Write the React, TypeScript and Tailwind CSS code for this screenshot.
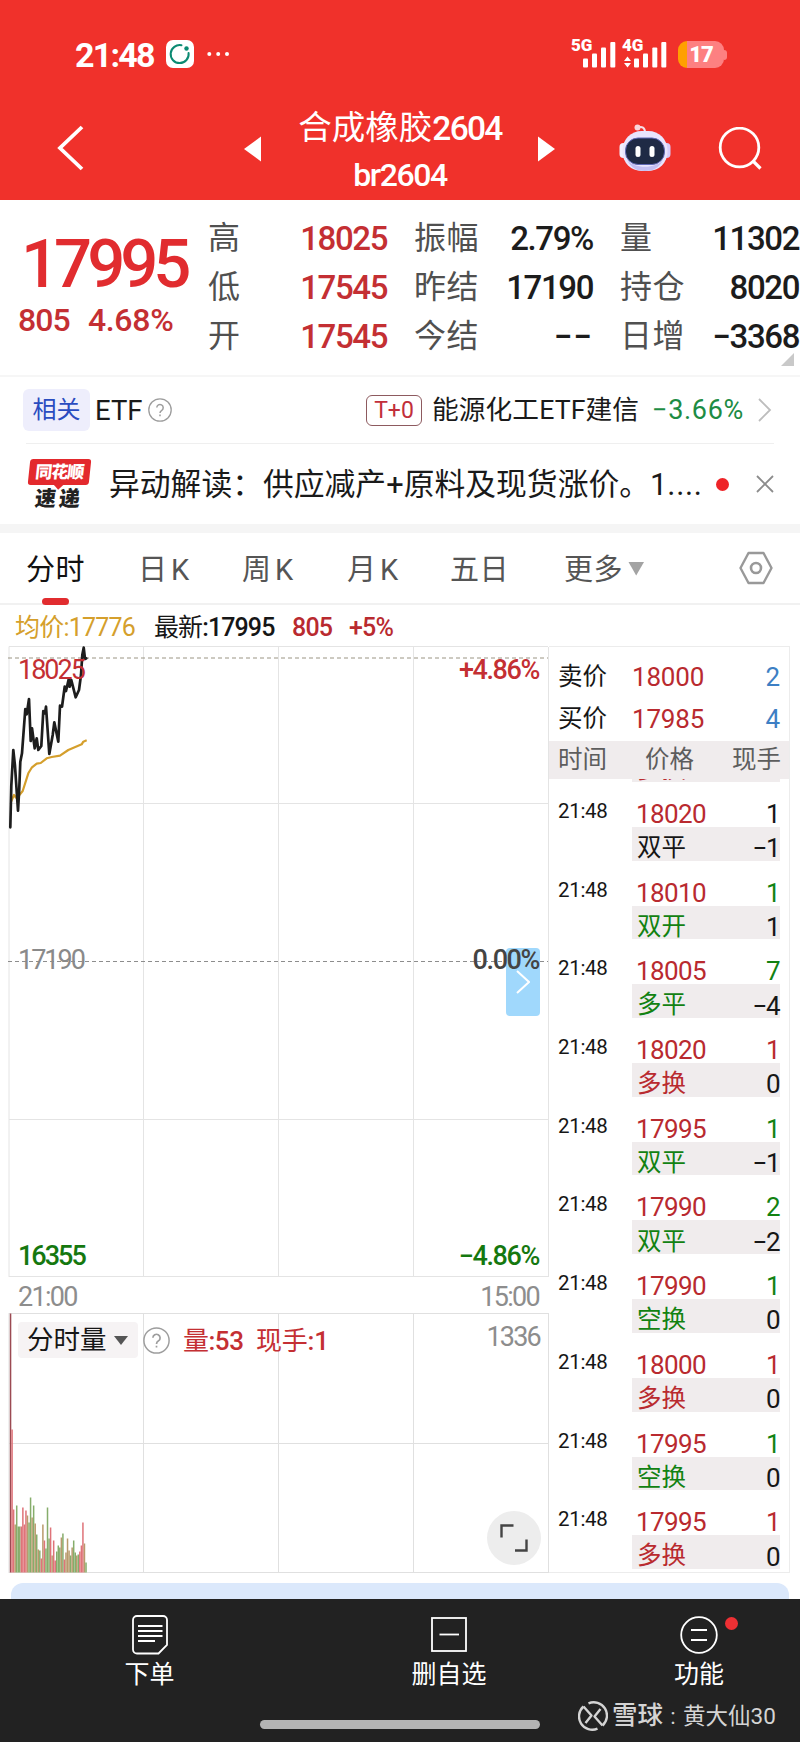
import { clsx } from "clsx";

type Tone = "red" | "green" | "black";

const toneClass: Record<Tone, string> = {
  red: "text-[#b92a2f]",
  green: "text-[#128212]",
  black: "text-[#161616]",
};

const stats = [
  [
    { label: "高", value: "18025", red: true },
    { label: "低", value: "17545", red: true },
    { label: "开", value: "17545", red: true },
  ],
  [
    { label: "振幅", value: "2.79%", red: false },
    { label: "昨结", value: "17190", red: false },
    { label: "今结", value: "−−", red: false },
  ],
  [
    { label: "量", value: "11302", red: false },
    { label: "持仓", value: "8020", red: false },
    { label: "日增", value: "−3368", red: false },
  ],
];

const trades: { price: string; vol: string; volTone: Tone; kind: string; kindTone: Tone; delta: string }[] = [
  { price: "18020", vol: "1", volTone: "black", kind: "双平", kindTone: "black", delta: "−1" },
  { price: "18010", vol: "1", volTone: "green", kind: "双开", kindTone: "green", delta: "1" },
  { price: "18005", vol: "7", volTone: "green", kind: "多平", kindTone: "green", delta: "−4" },
  { price: "18020", vol: "1", volTone: "red", kind: "多换", kindTone: "red", delta: "0" },
  { price: "17995", vol: "1", volTone: "green", kind: "双平", kindTone: "green", delta: "−1" },
  { price: "17990", vol: "2", volTone: "green", kind: "双平", kindTone: "green", delta: "−2" },
  { price: "17990", vol: "1", volTone: "green", kind: "空换", kindTone: "green", delta: "0" },
  { price: "18000", vol: "1", volTone: "red", kind: "多换", kindTone: "red", delta: "0" },
  { price: "17995", vol: "1", volTone: "green", kind: "空换", kindTone: "green", delta: "0" },
  { price: "17995", vol: "1", volTone: "red", kind: "多换", kindTone: "red", delta: "0" },
];

const priceLine =
  "2.3,181.3 3.3,140 5.3,104 7,120 10,164.7 11.3,142 12.3,115.7 14,107.3 17.3,63 18.7,68.3 21,53 22.7,95 24,82.3 26.7,102.3 28.7,92.3 30.3,104 33.3,100 35.3,65 37,67.3 38,60.7 41.3,108 44.7,89 46.3,76.3 50.3,95.7 52,59.7 54,60.7 56.7,40.7 58,45 60.7,33.3 61.7,40.7 63.3,34 67.7,51.3 71,44 73,29 74.3,9 75.7,1.7 77,13 78.3,12.3";

const avgLine =
  "3,155.7 6,149 8.7,152.3 14.7,145 20.3,127.3 23.7,121.7 28.7,117.7 32.7,117 38.7,112.3 43.7,111 52,109.7 60.3,104 73.7,98.3 75.3,95.7 78.7,94.3";

// [height, colour key] per minute bar
const volumes: [number, string][] = [
  [259, "d"], [143, "r"], [63, "r"], [48, "t"], [67, "g"], [46, "g"], [46, "g"], [46, "r"], [65, "r"], [48, "r"],
  [62, "r"], [57, "t"], [50, "g"], [75, "g"], [55, "t"], [67, "g"], [49, "t"], [38, "g"], [23, "t"], [22, "g"],
  [14, "r"], [48, "t"], [32, "r"], [24, "g"], [65, "g"], [34, "g"], [45, "r"], [17, "t"], [32, "r"], [12, "r"],
  [21, "g"], [27, "g"], [25, "g"], [35, "t"], [39, "g"], [13, "r"], [20, "t"], [34, "t"], [22, "t"], [17, "g"],
  [25, "t"], [32, "g"], [20, "g"], [17, "t"], [18, "g"], [21, "r"], [27, "r"], [50, "r"], [29, "t"], [10, "g"],
];

const barFill: Record<string, string> = { d: "#9b4a52", r: "#df7379", g: "#86ad6b", t: "#b99a6c" };

function StatusBar() {
  return (
    <div className="flex h-[98px] items-center text-white">
      <span className="ml-[75px] w-[91px] text-[34px] font-bold tracking-[-1.8px] leading-none pt-[11px]">21:48</span>
      <svg width="64" height="28" viewBox="0 0 64 28" className="mt-[10px]">
        <rect width="28" height="28" rx="7" fill="#fff" />
        <path d="M15.5 5.3A9 9 0 1 0 22.6 13" fill="none" stroke="#0b8a72" strokeWidth="2" strokeLinecap="round" />
        <circle cx="20.5" cy="8.5" r="2.2" fill="#0b8a72" />
        <circle cx="43.3" cy="14" r="2" fill="#fff" />
        <circle cx="52.2" cy="14" r="2" fill="#fff" />
        <circle cx="61" cy="14" r="2" fill="#fff" />
      </svg>
      <div className="relative ml-[342px] mt-[7px] h-[30px] w-[96px]">
        <span className="absolute left-[-1px] top-[-1px] text-[17px] font-black leading-none">5G</span>
        <span className="absolute left-[50px] top-[-1px] text-[17px] font-black leading-none">4G</span>
        <svg width="96" height="30" viewBox="0 0 96 30" fill="#fff">
          <rect x="11" y="20.5" width="5" height="9" rx="1" />
          <rect x="20" y="15.5" width="5" height="14" rx="1" />
          <rect x="29" y="9.5" width="5" height="20" rx="1" />
          <rect x="38.3" y="4" width="5" height="25.5" rx="1" />
          <path d="M52 23 55.5 18.5 59 23zM52 25 59 25 55.5 29.5z" />
          <rect x="62" y="20.5" width="5" height="9" rx="1" />
          <rect x="71" y="15.5" width="5" height="14" rx="1" />
          <rect x="80.3" y="9.5" width="5" height="20" rx="1" />
          <rect x="89.3" y="4" width="5" height="25.5" rx="1" />
        </svg>
      </div>
      <div className="ml-[10px] mt-[11px] flex items-center">
        <div className="flex h-[27px] w-[46px] items-center justify-center rounded-[9px] bg-linear-to-r from-[#ffa000] from-20% to-[#fd8081] to-20%">
          <span className="text-[22px] font-black leading-none tracking-[-1px]">17</span>
        </div>
        <div className="h-[10px] w-[3px] rounded-r-full bg-[#fd8081]" />
      </div>
    </div>
  );
}

function Robot() {
  return (
    <svg width="52" height="48" viewBox="0 0 52 48">
      <path d="M19 3.5c4-1.5 7 0 7 5" fill="none" stroke="#f6dfe8" strokeWidth="2" />
      <circle cx="18.5" cy="3.5" r="3" fill="#f9d5dc" />
      <rect x="0.5" y="19" width="9" height="15" rx="4" fill="#f2efff" />
      <rect x="42.5" y="19" width="9" height="15" rx="4" fill="#d6cdfb" />
      <rect x="3.5" y="7" width="45" height="40" rx="19" fill="#e9e5fd" />
      <path d="M8 36c7 9 29 9 36 0-4 8-10 11-18 11S12 44 8 36z" fill="#c3bff2" />
      <rect x="6.5" y="14" width="39" height="26.5" rx="12.5" fill="#1f2a45" stroke="#5f68b4" strokeWidth="1" />
      <rect x="16.5" y="22" width="5" height="11" rx="2.5" fill="#fff" />
      <rect x="30.5" y="22" width="5" height="11" rx="2.5" fill="#fff" />
    </svg>
  );
}

function TitleBar() {
  return (
    <div className="flex h-[102px] items-start text-white">
      <svg width="28" height="46" viewBox="0 0 28 46" className="ml-[56px] mt-[27px]">
        <path d="M26 2 4 23 26 44" fill="none" stroke="#fff" strokeWidth="3.8" />
      </svg>
      <svg width="18" height="26" viewBox="0 0 18 26" className="ml-[160px] mt-[38px]">
        <path d="M17 0.5 0 13 17 25.5z" fill="#fff" />
      </svg>
      <div className="ml-[18px] flex w-[240px] flex-col items-center">
        <div className="mt-[10px] flex h-[40px] items-center whitespace-nowrap text-[33.5px] leading-none">
          合成橡胶<span className="pt-[1px] font-medium tracking-[-1.7px]">2604</span>
        </div>
        <div className="mt-[9px] h-[36px] pt-[2px] text-[32px] font-medium leading-none tracking-[-1.4px]">br2604</div>
      </div>
      <svg width="18" height="26" viewBox="0 0 18 26" className="ml-[17px] mt-[38px]">
        <path d="M1 0.5 18 13 1 25.5z" fill="#fff" />
      </svg>
      <div className="ml-[64px] mt-[26px]">
        <Robot />
      </div>
      <svg width="46" height="46" viewBox="0 0 46 46" className="ml-[46px] mt-[29px]">
        <circle cx="22.5" cy="20.5" r="19.3" fill="none" stroke="#fff" strokeWidth="2.8" />
        <path d="M35.500 33.500 43.5 41.5" stroke="#fff" strokeWidth="3.2" />
      </svg>
    </div>
  );
}

function Quote() {
  return (
    <section className="relative flex h-[177px] border-b-2 border-[#f6f6f6] pt-[14px]">
      <div className="w-[208px]">
        <div className="ml-[21px] mt-[14px] h-[70px] text-[67px] font-medium leading-[72px] tracking-[-5px] text-[#e12c2f]">17995</div>
        <div className="ml-[18px] mt-[4px] flex gap-[18px] text-[32px] font-medium leading-[36px] tracking-[-0.9px] text-[#c42f33]">
          <span>805</span>
          <span className="tracking-[-0.3px]">4.68%</span>
        </div>
      </div>
      {stats.map((col, i) => (
        <div key={i} className={clsx("flex shrink-0 flex-col", i === 0 && "w-[180px]", i === 1 && "ml-[26px] w-[180px]", i === 2 && "ml-[26px] w-[180px]")}>
          {col.map((s) => (
            <div key={s.label} className="flex h-[48.7px] items-center justify-between leading-none">
              <span className="text-[32px] tracking-[0.5px] text-[#505050]">{s.label}</span>
              <span className={clsx("pr-[1px] pt-[1px] text-[33px] font-medium", s.value === "−−" ? "tracking-[1px]" : "tracking-[-1.4px]", s.red ? "text-[#c42f33]" : "text-[#1c1c1c]")}>
                {s.value}
              </span>
            </div>
          ))}
        </div>
      ))}
      <svg width="13" height="13" viewBox="0 0 13 13" className="absolute bottom-[9px] right-[6px]">
        <path d="M13 0v13H0z" fill="#c9c9c9" />
      </svg>
    </section>
  );
}

function Help({ size, className }: { size: number; className?: string }) {
  return (
    <svg width={size} height={size} viewBox="0 0 24 24" fill="none" stroke="#9d9d9d" strokeWidth="1.3" className={className}>
      <circle cx="12" cy="12" r="11.2" />
      <path d="M8.8 9.6a3.2 3.2 0 1 1 5 2.7c-1.3.8-1.8 1.3-1.8 2.7M12 16.6v1.6" strokeWidth="1.5" />
    </svg>
  );
}

function EtfRow() {
  return (
    <div className="flex h-[66px] items-center leading-none">
      <span className="ml-[23px] flex h-[42px] w-[67px] items-center justify-center rounded-md bg-[#eeeefc] text-[24px] text-[#2a4cc0]">相关</span>
      <span className="ml-[5px] w-[49px] pt-[1px] text-[27.5px] text-[#1a1a1a]">ETF</span>
      <Help size={24} className="ml-[4px]" />
      <span className="ml-[194px] flex h-[31px] w-[56px] items-center justify-center rounded-md border border-[#8d5a5f] text-[23px] text-[#c22f3b]">T+0</span>
      <span className="ml-[10px] w-[209px] whitespace-nowrap pt-[1px] text-[26.7px] tracking-[0.1px] text-[#1a1a1a]">能源化工ETF建信</span>
      <span className="ml-[11px] w-[93px] pt-[1px] text-[27px] tracking-[0.7px] text-[#1d8c44]">−3.66%</span>
      <svg width="15" height="26" viewBox="0 0 15 26" className="ml-[12px]">
        <path d="M2 2 13 13 2 24" fill="none" stroke="#bdbdbd" strokeWidth="1.8" />
      </svg>
    </div>
  );
}

function NewsRow() {
  return (
    <div className="flex h-[80px] items-center leading-none">
      <div className="ml-[27px] flex w-[64px] flex-col items-center font-black">
        <div className="relative flex h-[26px] w-[61px] -skew-x-6 items-center justify-center rounded-[3px] bg-[#e3292d] text-[17px] tracking-[-1px] text-white">
          同花顺
          <span className="absolute bottom-[-3px] left-[27px] h-2 w-2 rotate-45 bg-[#e3292d]" />
        </div>
        <div className="mt-[4px] -skew-x-6 text-[21px] tracking-[3px] text-[#222]">速递</div>
      </div>
      <span className="ml-[18px] w-[594px] whitespace-nowrap pt-[2px] text-[30.8px] text-[#1a1a1a]">
        异动解读：供应减产+原料及现货涨价。1<span className="tracking-[0.7px]">....</span>
      </span>
      <span className="ml-[13px] h-[13px] w-[13px] rounded-full bg-[#ee2428]" />
      <svg width="18" height="18" viewBox="0 0 18 18" className="ml-[27px]">
        <path d="M1 1 17 17M17 1 1 17" stroke="#8c8c8c" strokeWidth="1.8" />
      </svg>
    </div>
  );
}

function Tabs() {
  return (
    <nav className="relative flex h-[72px] items-center border-b-2 border-[#f1f1f1] pt-[4px] text-[29px] leading-none tracking-[0.5px] text-[#555]">
      <span className="ml-[26px] w-[112px] text-[#111]">分时</span>
      <span className="w-[104px] tracking-[4px]">日K</span>
      <span className="w-[105px] tracking-[4px]">周K</span>
      <span className="w-[103px] tracking-[4px]">月K</span>
      <span className="w-[114px]">五日</span>
      <span className="w-[64px]">更多</span>
      <svg width="17" height="15" viewBox="0 0 17 15" className="-mt-[4px]">
        <path d="M0.5 1h15.5L8.2 14.5z" fill="#a3a3a3" />
      </svg>
      <svg width="36" height="34" viewBox="0 0 36 34" className="-mt-[4px] ml-[93px]" fill="none" stroke="#999">
        <path d="M10.5 2h15L33.5 17l-8 15h-15L2.5 17z" strokeWidth="2.4" strokeLinejoin="round" />
        <circle cx="18" cy="17" r="5" strokeWidth="2.6" />
      </svg>
      <span className="absolute bottom-[-2px] left-[42px] h-[7px] w-[27px] rounded-full bg-[#e12c2f]" />
    </nav>
  );
}

function PriceChart() {
  return (
    <div className="relative h-[631px] text-[27px] font-medium leading-none tracking-[-2px]">
      <svg width="541" height="632" viewBox="0 0 541 632" fill="none">
        <path d="M1 0.5H540M1 157.5H540M1 473.5H540M1 630.5H540M1 0.5V631M135.5 1V631M270.5 1V631M405.5 1V631M540.5 1V631" stroke="#e4e4e4" />
        <path d="M0 12H540" stroke="#9a9483" strokeDasharray="4 3" />
        <path d="M0 315.5H540" stroke="#8d8d8d" strokeDasharray="4 3" />
        <polyline points={avgLine} stroke="#d59f2c" strokeWidth="2.2" strokeLinejoin="round" />
        <polyline points={priceLine} stroke="#1d1d1d" strokeWidth="2.7" strokeLinejoin="round" strokeLinecap="round" />
      </svg>
      <div className="absolute left-[498px] top-[302px] flex h-[68px] w-[34px] items-center justify-center rounded-[4px] bg-[#a0d8fc]">
        <svg width="14" height="24" viewBox="0 0 14 24">
          <path d="M1 1 13 12 1 23" fill="none" stroke="#fff" strokeWidth="2" />
        </svg>
      </div>
      <div className="absolute left-[10px] right-[10px] top-[11px] flex justify-between text-[#c42f33]">
        <span className="font-normal">18025</span>
        <span className="tracking-[-1.4px]">+4.86%</span>
      </div>
      <div className="absolute left-[10px] right-[10px] top-[301px] flex justify-between text-[#444]">
        <span className="font-normal text-[#8a8a8a]">17190</span>
        <span className="tracking-[-1.4px]">0.00%</span>
      </div>
      <div className="absolute left-[10px] right-[10px] top-[597px] flex justify-between text-[#15780f]">
        <span>16355</span>
        <span className="tracking-[-1.4px]">−4.86%</span>
      </div>
    </div>
  );
}

function VolumeChart() {
  return (
    <div className="relative h-[260px] leading-none">
      <svg width="541" height="260" viewBox="0 0 541 260" fill="none">
        <path d="M1 0.5H540M1 130.5H540M1 259.5H540M1 0V260M135.5 0V260M270.5 0V260M405.5 0V260M540.5 0V260" stroke="#e0e0e0" />
        {volumes.map(([h, c], i) => (
          <rect key={i} x={1.8 + i * 1.54} y={259.5 - h} width={1.5} height={h} fill={barFill[c]} />
        ))}
      </svg>
      <div className="absolute left-[10px] right-[9px] top-[9px] flex items-center text-[26px] text-[#c42f33]">
        <span className="flex h-[36px] w-[120px] items-center rounded-[4px] bg-[#f6f3f4] pl-[9px] pt-[1px] text-[26.5px] text-[#161616]">
          分时量
          <svg width="14" height="9" viewBox="0 0 14 9" className="ml-[7px]">
            <path d="M0 0h14L7 9z" fill="#555" />
          </svg>
        </span>
        <Help size={27} className="ml-[5px]" />
        <span className="ml-[13px] w-[73px] whitespace-nowrap pt-[1px] font-medium tracking-[-0.5px]"><span className="font-normal">量</span>:53</span>
        <span className="whitespace-nowrap pt-[1px] font-medium tracking-[-0.2px]"><span className="font-normal">现手</span>:1</span>
        <span className="mb-[6px] ml-auto text-[27px] tracking-[-1.8px] text-[#8d8d8d]">1336</span>
      </div>
      <div className="absolute left-[479px] top-[198px] flex h-[54px] w-[54px] items-center justify-center rounded-full bg-[#ededed]">
        <svg width="28" height="28" viewBox="0 0 28 28" fill="none" stroke="#444" strokeWidth="2.4">
          <path d="M1.5 13.5V1.5H13.5M26.5 15.5V26.5H15" />
        </svg>
      </div>
    </div>
  );
}

function OrderPanel() {
  return (
    <aside className="flex h-[927px] w-[241px] flex-col border border-[#ececec] border-l-0 leading-none">
      <div className="flex h-[94px] shrink-0 flex-col pt-[9px]">
        {[
          ["卖价", "18000", "2"],
          ["买价", "17985", "4"],
        ].map(([label, price, vol]) => (
          <div key={label} className="flex h-[42px] items-center pl-[9px] pr-[9px]">
            <span className="w-[74px] text-[24.5px] text-[#161616]">{label}</span>
            <span className="text-[26px] tracking-[-0.2px] text-[#b92a2f]">{price}</span>
            <span className="ml-auto text-[26px] text-[#3d7fc4]">{vol}</span>
          </div>
        ))}
      </div>
      <div className="flex h-[38px] shrink-0 items-center bg-[#f0eced] pl-[9px] pr-[8px] text-[24.5px] text-[#5d5d5d]">
        <span className="w-[87px]">时间</span>
        <span>价格</span>
        <span className="ml-auto">现手</span>
      </div>
      <div className="ml-[83px] flex h-[3px] w-[148px] shrink-0 items-start justify-between overflow-hidden bg-[#f0eced] px-[5px] text-[24.5px] text-[#b92a2f]">
        <span className="-mt-[21px]">多换</span>
      </div>
      {trades.map((t, i) => (
        <div key={i} className="flex h-[78.7px] shrink-0 pl-[9px]">
          <span className="w-[74px] pt-[19px] text-[20.5px] tracking-[-0.3px] text-[#161616]">21:48</span>
          <div className="w-[148px]">
            <div className="flex h-[45px] items-end justify-between pl-[4px] text-[26px] tracking-[-0.6px]">
              <span className={toneClass.red}>{t.price}</span>
              <span className={toneClass[t.volTone]}>{t.vol}</span>
            </div>
            <div className="flex h-[33.7px] items-center justify-between bg-[#f0eced] pl-[5px] pt-[9px]">
              <span className={clsx("text-[24.5px]", toneClass[t.kindTone])}>{t.kind}</span>
              <span className="pr-px text-[26px] tracking-[-1.5px] text-[#161616]">{t.delta}</span>
            </div>
          </div>
        </div>
      ))}
    </aside>
  );
}

function Footer() {
  return (
    <footer className="relative flex h-[143px] bg-[#222] pt-[14px] text-[25px] leading-none text-white">
      <div className="flex w-[299px] flex-col items-center">
        <svg width="38" height="42" viewBox="0 0 38 42" fill="none" stroke="#fff" strokeWidth="1.8">
          <path d="M6 3h26a4 4 0 0 1 4 4v25l-8.5 8.5H6a4 4 0 0 1-4-4V7a4 4 0 0 1 4-4z" />
          <path d="M7 13H31.5M7 18H31.5M7 23H31.5M7 28H24" />
        </svg>
        <span className="mt-[7px]">下单</span>
      </div>
      <div className="flex w-[300px] flex-col items-center">
        <svg width="38" height="42" viewBox="0 0 38 42" fill="none" stroke="#fff" strokeWidth="1.8">
          <rect x="2" y="5" width="34" height="33" />
          <path d="M9.5 21.5H29" />
        </svg>
        <span className="mt-[7px]">删自选</span>
      </div>
      <div className="relative flex w-[200px] flex-col items-center">
        <svg width="38" height="42" viewBox="0 0 38 42" fill="none" stroke="#fff" strokeWidth="1.8">
          <circle cx="19" cy="22" r="17.8" />
          <path d="M11 17H27M11 27H27" />
        </svg>
        <span className="absolute left-[126px] top-[4px] h-[13px] w-[13px] rounded-full bg-[#ee3034]" />
        <span className="mt-[7px]">功能</span>
      </div>
      <div className="absolute bottom-[13px] left-[260px] h-[9px] w-[280px] rounded-full bg-[#b4b4b4]" />
      <div className="absolute left-[578px] top-[102px] flex h-[30px] items-center whitespace-nowrap text-[22.5px] text-[#d4d4d4]">
        <svg width="30" height="30" viewBox="0 0 30 30" fill="none" stroke="#d4d4d4" strokeWidth="2.4">
          <path d="M10.5 2.3A13.3 13.3 0 0 1 24.5 24.5M19.5 27.7A13.3 13.3 0 0 1 5.5 5.5" />
          <path d="M5.5 5.5 13.5 14.5 7.5 22M24.5 24.5 16.5 15.5 22.5 8" strokeLinejoin="round" />
        </svg>
        <span className="ml-[4px] text-[25.5px] font-medium">雪球</span>
        <span className="w-[20px] text-center">:</span>
        <span>黄大仙30</span>
      </div>
    </footer>
  );
}

export default function App() {
  return (
    <div className="w-[800px] overflow-hidden bg-white font-['Roboto','Noto_Sans_CJK_SC',sans-serif]">
      <header className="h-[200px] bg-[#f0312b]">
        <StatusBar />
        <TitleBar />
      </header>
      <Quote />
      <EtfRow />
      <div className="mx-[26px] h-px bg-[#efefef]" />
      <NewsRow />
      <div className="h-[9px] bg-[#f5f5f5]" />
      <Tabs />
      <div className="flex h-[41px] items-center whitespace-nowrap pt-[4px] text-[25px] leading-none tracking-[-0.8px] text-[#161616]">
        <span className="ml-[15px] w-[139px] text-[#d59f2c]">均价:17776</span>
        <span className="w-[138px] font-medium tracking-[-0.9px]"><span className="font-normal">最新</span>:17995</span>
        <span className="w-[57px] font-medium text-[#b92a2f]">805</span>
        <span className="font-medium text-[#b92a2f]">+5%</span>
      </div>
      <div className="flex h-[937px]">
        <div className="ml-[8px] w-[541px]">
          <PriceChart />
          <div className="flex h-[36px] items-center justify-between pl-[10px] pr-[10px] pt-[4px] text-[27px] leading-none tracking-[-1.7px] text-[#8d8d8d]">
            <span>21:00</span>
            <span>15:00</span>
          </div>
          <VolumeChart />
        </div>
        <OrderPanel />
      </div>
      <div className="mx-[11px] h-[16px] rounded-t-[12px] bg-[#dbe8fb]" />
      <Footer />
    </div>
  );
}
